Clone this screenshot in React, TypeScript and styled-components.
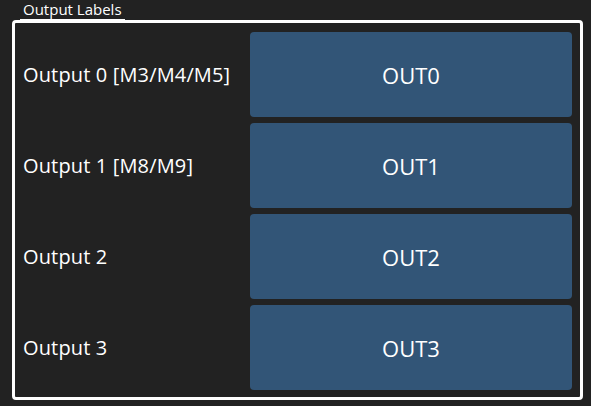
import { createGlobalStyle, styled } from "styled-components";

const GlobalStyle = createGlobalStyle`
  html, body {
    margin: 0;
    padding: 0;
    background: #222222;
  }
  body {
    width: 591px;
    height: 406px;
    overflow: hidden;
    font-family: "Open Sans", "Noto Sans", sans-serif;
    color: #ffffff;
  }
`;

const Legend = styled.div`
  margin-left: 20px;
  width: fit-content;
  height: 20px;
  box-sizing: border-box;
  padding: 0 3px;
  font-size: 15px;
  line-height: 19px;
  border-bottom: 1px solid #ffffff;
`;

const Group = styled.div`
  margin-left: 12px;
  width: 571px;
  height: 380px;
  box-sizing: border-box;
  border: 3px solid #ffffff;
  border-radius: 4px;
  padding: 9px 8px 7px 0;
  display: grid;
  grid-template-columns: 235px 1fr;
  grid-auto-rows: 85px;
  row-gap: 6px;
`;

const Label = styled.div`
  display: flex;
  align-items: center;
  padding-left: 8px;
  font-size: 20px;
  letter-spacing: 0.15px;
`;

const OutButton = styled.button`
  border: none;
  border-radius: 4px;
  background: #325577;
  color: #ffffff;
  font-family: inherit;
  font-size: 22px;
  padding: 0;
`;

const outputs = [
  { label: "Output 0 [M3/M4/M5]", name: "OUT0" },
  { label: "Output 1 [M8/M9]", name: "OUT1" },
  { label: "Output 2", name: "OUT2" },
  { label: "Output 3", name: "OUT3" },
];

export default function App() {
  return (
    <>
      <GlobalStyle />
      <Legend>Output Labels</Legend>
      <Group>
        {outputs.map((o) => (
          <>
            <Label key={o.label}>{o.label}</Label>
            <OutButton key={o.name}>{o.name}</OutButton>
          </>
        ))}
      </Group>
    </>
  );
}
